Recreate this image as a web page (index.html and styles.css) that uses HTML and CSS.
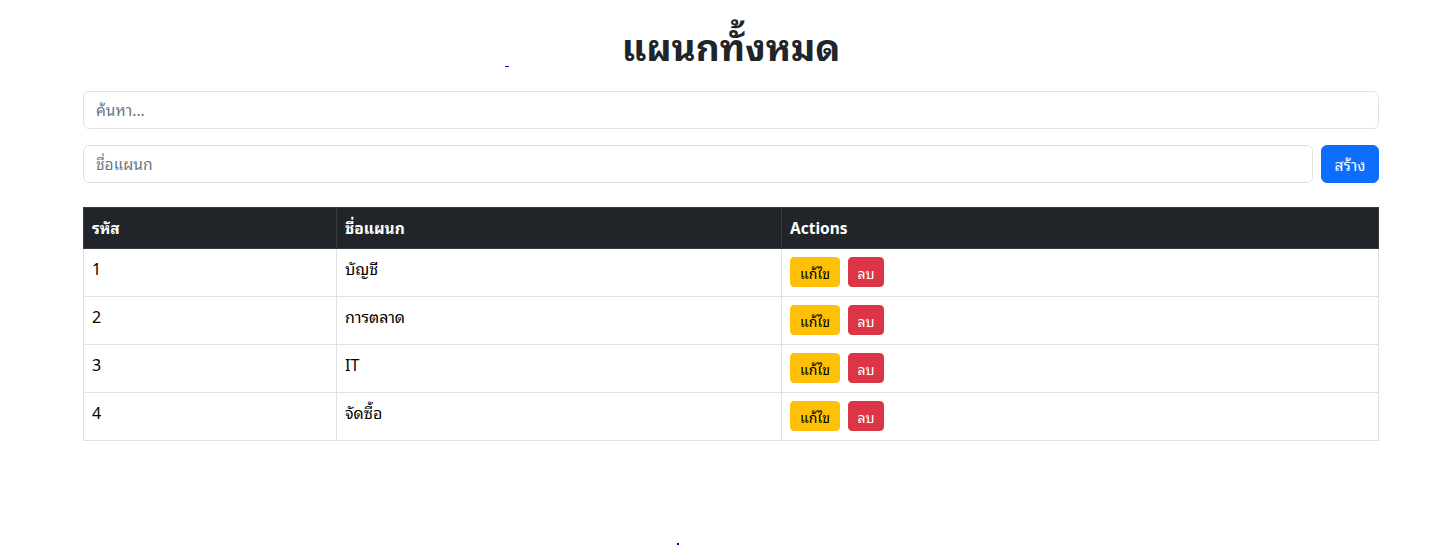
FILE: index.html
```html
<!DOCTYPE html>
<html lang="th">
<head>
<meta charset="utf-8">
<title>แผนกทั้งหมด</title>
<link rel="stylesheet" href="styles.css">
</head>
<body>
<div class="container">
  <header class="page-head">
    <a class="stray-link" href="#"></a>
    <h1 class="title">แผนกทั้งหมด</h1>
  </header>
  <input class="form-control" type="text" placeholder="ค้นหา...">
  <div class="create-row">
    <input class="form-control" type="text" placeholder="ชื่อแผนก">
    <button class="btn btn-primary" type="button">สร้าง</button>
  </div>
  <table class="table">
    <thead>
      <tr><th class="c1">รหัส</th><th class="c2">ชื่อแผนก</th><th>Actions</th></tr>
    </thead>
    <tbody>
      <tr><td>1</td><td>บัญชี</td><td><div class="actions"><button class="btn btn-sm btn-warning">แก้ไข</button><button class="btn btn-sm btn-danger">ลบ</button></div></td></tr>
      <tr><td>2</td><td>การตลาด</td><td><div class="actions"><button class="btn btn-sm btn-warning">แก้ไข</button><button class="btn btn-sm btn-danger">ลบ</button></div></td></tr>
      <tr><td>3</td><td>IT</td><td><div class="actions"><button class="btn btn-sm btn-warning">แก้ไข</button><button class="btn btn-sm btn-danger">ลบ</button></div></td></tr>
      <tr><td>4</td><td>จัดซื้อ</td><td><div class="actions"><button class="btn btn-sm btn-warning">แก้ไข</button><button class="btn btn-sm btn-danger">ลบ</button></div></td></tr>
    </tbody>
  </table>
  <div class="foot"><a class="foot-link" href="#"></a></div>
</div>
</body>
</html>
```
FILE: styles.css
```css
* { box-sizing: border-box; }
html, body { margin: 0; padding: 0; background: #fff; }
body {
  font-family: "Noto Sans", "Noto Sans Thai Looped", "Noto Sans Thai", "DejaVu Sans", sans-serif;
  font-size: 16px;
  line-height: 1.5;
  color: #212529;
}
.container {
  width: 1296px;
  margin-left: 83px;
  padding-top: 24px;
}
.page-head {
  position: relative;
  height: 51px;
  margin-bottom: 16px;
}
.title {
  margin: 0;
  text-align: center;
  font-size: 37px;
  font-weight: 700;
  line-height: 46px;
  color: #212529;
}
.stray-link {
  position: absolute;
  left: 422px;
  top: 41px;
  width: 4px;
  height: 2px;
  border-bottom: 1px solid #0000ee;
}
.form-control {
  display: block;
  width: 100%;
  height: 38px;
  padding: 6px 12px;
  font-family: inherit;
  font-size: 15.5px;
  color: #212529;
  background: #fff;
  border: 1px solid #dee2e6;
  border-radius: 6px;
  outline: none;
}
.form-control::placeholder { color: #6c757d; }
.create-row {
  display: flex;
  gap: 8px;
  margin-top: 16px;
  margin-bottom: 24px;
}
.create-row .form-control { flex: 1; }
.btn {
  font-family: inherit;
  border: 1px solid transparent;
  cursor: pointer;
  white-space: nowrap;
}
.btn-primary {
  width: 58px;
  height: 38px;
  padding: 0;
  font-size: 15.5px;
  color: #fff;
  background: #0d6efd;
  border-color: #0d6efd;
  border-radius: 6px;
}
.btn-sm {
  height: 30px;
  padding: 0 8px;
  font-size: 14px;
  border-radius: 4px;
}
.btn-warning { width: 50px; padding: 0; background: #ffc107; border-color: #ffc107; color: #000; }
.btn-danger { width: 36px; padding: 0; background: #dc3545; border-color: #dc3545; color: #fff; }
.actions { display: flex; gap: 8px; }
.table {
  width: 1296px;
  border-collapse: collapse;
  table-layout: fixed;
  font-size: 16px;
}
.table th, .table td {
  text-align: left;
  vertical-align: top;
  padding: 8px;
  border: 1px solid #dee2e6;
}
.table th {
  height: 41px;
  line-height: 24px;
  font-size: 15.5px;
  background: #212529;
  color: #fff;
  font-weight: 700;
  border-color: #373b3e;
}
.table td { height: 48px; line-height: 24px; color: #000; }
.table th.c1 { width: 253px; }
.table th.c2 { width: 445px; }
.foot {
  height: 105px;
  padding-top: 102px;
  padding-left: 594px;
}
.foot-link {
  display: block;
  width: 2px;
  height: 2px;
  background: #0000ee;
}
```
